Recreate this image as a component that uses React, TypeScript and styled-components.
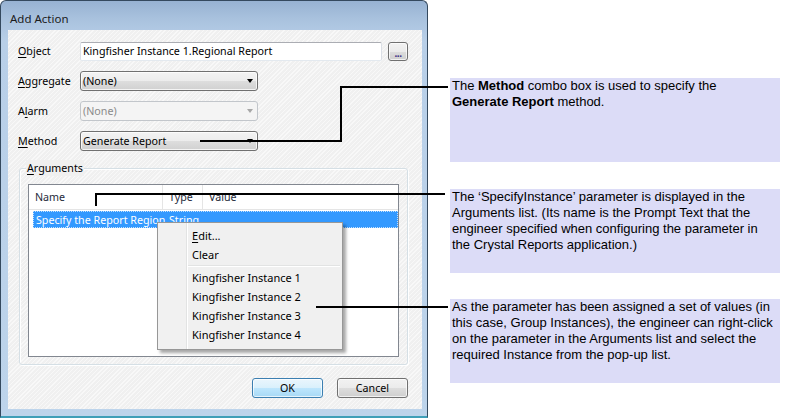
import { createGlobalStyle, styled } from "styled-components"

const uiFont = `"Noto Sans", "Segoe UI", sans-serif`
const docFont = `"Liberation Sans", Arial, sans-serif`

const GlobalStyle = createGlobalStyle`
  html, body {
    margin: 0;
    padding: 0;
    background: #ffffff;
  }
`

const Page = styled.div`
  position: relative;
  width: 790px;
  height: 418px;
  display: flex;
  overflow: hidden;
  background: #ffffff;
`

const Window = styled.div`
  box-sizing: border-box;
  width: 428px;
  height: 418px;
  display: flex;
  flex-direction: column;
  padding: 0 5px 7px 7px;
  border: 1px solid #34495e;
  border-bottom: 2px solid #3f9fb8;
  border-radius: 6px 6px 0 0;
  background: linear-gradient(#97b2d2 0px, #a9c2de 18px, #b8cfe8 40px, #bdd4eb 100%);
`

const TitleBar = styled.div`
  box-sizing: border-box;
  height: 29px;
  padding: 10px 0 0 2px;
  font-family: ${uiFont};
  font-size: 11.5px;
  line-height: 16px;
  color: #1b1b1b;
`

const Client = styled.div`
  flex: 1;
  display: flex;
  flex-direction: column;
  padding: 11px 14px 11px 11px;
  background-color: #f0f0f0;
  background-image: repeating-linear-gradient(
    135deg,
    rgba(255, 255, 255, 0.55) 0 1px,
    transparent 1px 3px
  );
  font-family: ${uiFont};
  font-size: 10.7px;
  color: #000;
`

const Form = styled.div`
  display: grid;
  grid-template-columns: 61px 1fr;
  grid-auto-rows: 20px;
  row-gap: 10px;
  align-items: center;
`

const Label = styled.span`
  margin-left: -1px;
  color: #000;
`

const Key = styled.span`
  text-decoration: underline;
  text-underline-offset: 2px;
`

const FieldRow = styled.div`
  display: flex;
  align-items: center;
  gap: 6px;
`

const TextBox = styled.div`
  box-sizing: border-box;
  flex: 1;
  height: 19px;
  padding-left: 2px;
  display: flex;
  align-items: center;
  background: #fff;
  border: 1px solid #dbdfe6;
  border-top-color: #abadb3;
  border-bottom-color: #e3e9ef;
  border-radius: 2px;
`

const MoreButton = styled.div`
  box-sizing: border-box;
  width: 20px;
  height: 19px;
  display: flex;
  align-items: flex-end;
  justify-content: center;
  padding-bottom: 3px;
  border: 1px solid #707070;
  border-radius: 3px;
  background: linear-gradient(#f2f2f2 0%, #ebebeb 50%, #dddddd 50%, #cfcfcf 100%);
  box-shadow: inset 0 0 0 1px rgba(255, 255, 255, 0.7);
  color: #3b2f86;
  font-size: 10px;
  font-weight: bold;
  line-height: 8px;
  letter-spacing: -0.5px;
`

const Combo = styled.div<{ $disabled?: boolean }>`
  box-sizing: border-box;
  width: 178px;
  height: 20px;
  display: flex;
  align-items: center;
  justify-content: space-between;
  padding: 0 4px 0 2px;
  border: 1px solid ${(p) => (p.$disabled ? "#c2c6cb" : "#707070")};
  border-radius: 3px;
  color: ${(p) => (p.$disabled ? "#8a8a8a" : "#000")};
  background: ${(p) =>
    p.$disabled
      ? "#f4f4f4"
      : "linear-gradient(#f3f3f3 0%, #ececec 50%, #dedede 50%, #d0d0d0 100%)"};
  box-shadow: ${(p) => (p.$disabled ? "none" : "inset 0 0 0 1px rgba(255,255,255,0.75)")};
`

const Arrow = styled.span<{ $disabled?: boolean }>`
  width: 0;
  height: 0;
  border-left: 3.5px solid transparent;
  border-right: 3.5px solid transparent;
  border-top: 4px solid ${(p) => (p.$disabled ? "#a7a7a7" : "#000")};
`

const Group = styled.div`
  position: relative;
  flex: 1;
  display: flex;
  flex-direction: column;
  margin-top: 17px;
  padding: 15px 8px 7px;
  border: 1px solid #d5dfe5;
  border-radius: 3px;
  box-shadow: inset 1px 1px 0 #fff, 1px 1px 0 #fff;
`

const Legend = styled.span`
  position: absolute;
  top: -9px;
  left: 6px;
  padding: 0 1px;
  line-height: 16px;
  background: #f0f0f0;
`

const ListView = styled.div`
  flex: 1;
  display: flex;
  flex-direction: column;
  background: #fff;
  border: 1px solid #828790;
`

const Header = styled.div`
  display: grid;
  grid-template-columns: 134px 40px 1fr;
  height: 24px;
  border-bottom: 1px solid #e5e5e5;
  color: #1e2a3a;
`

const HeaderCell = styled.div<{ $last?: boolean }>`
  display: flex;
  align-items: center;
  padding-left: 6px;
  border-right: ${(p) => (p.$last ? "none" : "1px solid #e5e5e5")};
`

const Row = styled.div<{ $selected?: boolean }>`
  display: grid;
  grid-template-columns: 130px 1fr;
  height: 17px;
  margin: 1px 0 0 4px;
  align-items: center;
  background: ${(p) => (p.$selected ? "#3399ff" : "transparent")};
  color: ${(p) => (p.$selected ? "#fff" : "#000")};
  outline: 1px dotted rgba(255, 255, 255, 0.7);
  outline-offset: -1px;
`

const Cell = styled.span<{ $pad: number }>`
  padding-left: ${(p) => p.$pad}px;
  white-space: nowrap;
`

const ButtonRow = styled.div`
  display: flex;
  justify-content: flex-end;
  gap: 14px;
  margin-top: 13px;
`

const DialogButton = styled.div<{ $default?: boolean }>`
  box-sizing: border-box;
  width: 71px;
  height: 20px;
  display: flex;
  align-items: center;
  justify-content: center;
  border: 1px solid ${(p) => (p.$default ? "#3c7fb1" : "#707070")};
  border-radius: 3px;
  background: ${(p) =>
    p.$default
      ? "linear-gradient(#eaf6fd 0%, #d9f0fc 50%, #bee6fd 50%, #a7d9f5 100%)"
      : "linear-gradient(#f2f2f2 0%, #ebebeb 50%, #dddddd 50%, #cfcfcf 100%)"};
  box-shadow: inset 0 0 0 1px rgba(255, 255, 255, 0.7);
`

const ContextMenu = styled.div`
  position: absolute;
  left: 157px;
  top: 222px;
  box-sizing: border-box;
  width: 186px;
  height: 128px;
  padding: 3px 0 5px;
  border: 1px solid #979797;
  background: linear-gradient(
    to right,
    #f1f1f1 0 28px,
    #e2e3e3 28px 29px,
    #ffffff 29px 30px,
    #f0f0f0 30px
  );
  box-shadow: 3px 3px 3px rgba(0, 0, 0, 0.35);
  font-family: ${uiFont};
  font-size: 11px;
  color: #000;
`

const MenuItem = styled.div`
  height: 19px;
  line-height: 19px;
  padding-left: 34px;
  white-space: nowrap;
`

const MenuSeparator = styled.div`
  margin: 1px 2px 1px 30px;
  height: 0;
  border-top: 1px solid #e2e3e3;
  border-bottom: 1px solid #fff;
`

const Callouts = styled.div`
  display: flex;
  flex-direction: column;
  gap: 26.5px;
  width: 330px;
  margin-left: 22px;
  padding-top: 78px;
`

const Callout = styled.div`
  box-sizing: border-box;
  height: 84px;
  padding: 0 2px;
  background: #dcdcf7;
  font-family: ${docFont};
  font-size: 13px;
  line-height: 16px;
  color: #000;
  white-space: nowrap;
`

const Connectors = styled.svg`
  position: absolute;
  left: 0;
  top: 0;
  pointer-events: none;
`

const instances = [
  "Kingfisher Instance 1",
  "Kingfisher Instance 2",
  "Kingfisher Instance 3",
  "Kingfisher Instance 4",
]

export default function App() {
  return (
    <>
      <GlobalStyle />
      <Page>
        <Window>
          <TitleBar>Add Action</TitleBar>
          <Client>
            <Form>
              <Label>
                <Key>O</Key>bject
              </Label>
              <FieldRow>
                <TextBox>Kingfisher Instance 1.Regional Report</TextBox>
                <MoreButton>...</MoreButton>
              </FieldRow>

              <Label>
                <Key>A</Key>ggregate
              </Label>
              <Combo>
                (None)
                <Arrow />
              </Combo>

              <Label>
                A<Key>l</Key>arm
              </Label>
              <Combo $disabled>
                (None)
                <Arrow $disabled />
              </Combo>

              <Label>
                <Key>M</Key>ethod
              </Label>
              <Combo>
                Generate Report
                <Arrow />
              </Combo>
            </Form>

            <Group>
              <Legend>
                <Key>A</Key>rguments
              </Legend>
              <ListView>
                <Header>
                  <HeaderCell>Name</HeaderCell>
                  <HeaderCell>Type</HeaderCell>
                  <HeaderCell $last>Value</HeaderCell>
                </Header>
                <Row $selected>
                  <Cell $pad={3}>Specify the Report Region</Cell>
                  <Cell $pad={6}>String</Cell>
                </Row>
              </ListView>
            </Group>

            <ButtonRow>
              <DialogButton $default>OK</DialogButton>
              <DialogButton>Cancel</DialogButton>
            </ButtonRow>
          </Client>
        </Window>

        <Callouts>
          <Callout>
            The <b>Method</b> combo box is used to specify the
            <br />
            <b>Generate Report</b> method.
          </Callout>
          <Callout>
            The ‘SpecifyInstance’ parameter is displayed in the
            <br />
            Arguments list. (Its name is the Prompt Text that the
            <br />
            engineer specified when configuring the parameter in
            <br />
            the Crystal Reports application.)
          </Callout>
          <Callout>
            As the parameter has been assigned a set of values (in
            <br />
            this case, Group Instances), the engineer can right-click
            <br />
            on the parameter in the Arguments list and select the
            <br />
            required Instance from the pop-up list.
          </Callout>
        </Callouts>

        <ContextMenu>
          <MenuItem>
            <Key>E</Key>dit...
          </MenuItem>
          <MenuItem>Clear</MenuItem>
          <MenuSeparator />
          {instances.map((name) => (
            <MenuItem key={name}>{name}</MenuItem>
          ))}
        </ContextMenu>

        <Connectors width="790" height="418" viewBox="0 0 790 418">
          <g fill="none" stroke="#000" strokeWidth="2">
            <polyline points="200,141 341,141 341,87 448,87" />
            <polyline points="96,206 96,194 445,194" />
            <line x1="316" y1="307" x2="448" y2="307" />
          </g>
        </Connectors>
      </Page>
    </>
  )
}
